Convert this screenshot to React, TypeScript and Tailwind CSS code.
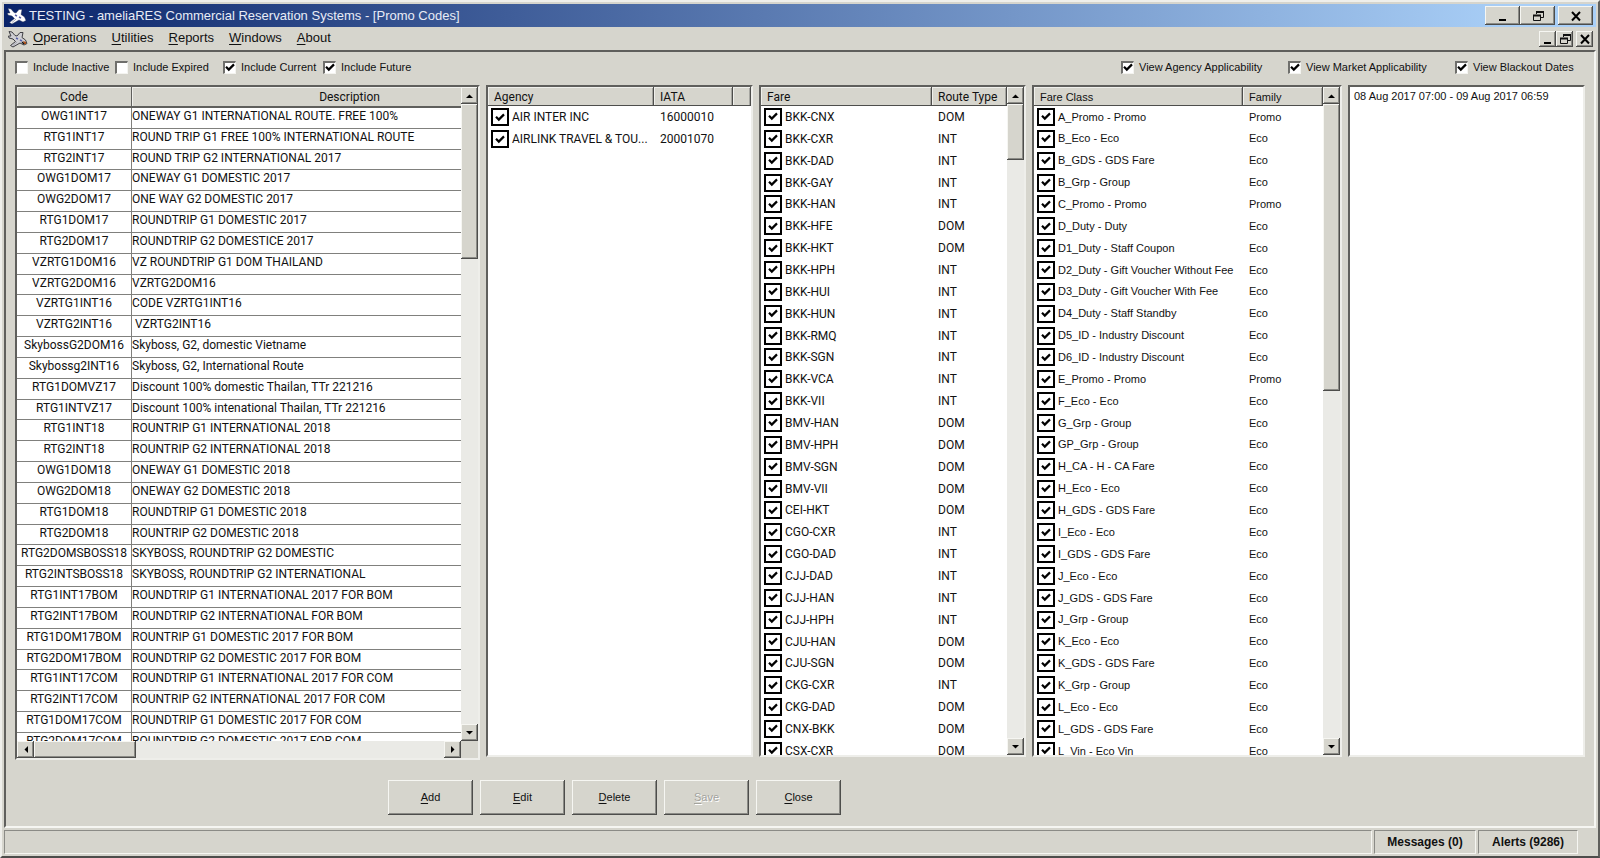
import React from 'react';

const RAISED =
  'bg-[#d6d5cd] shadow-[inset_-1px_-1px_#4d4d4b,inset_1px_1px_#f6f6f2,inset_-2px_-2px_#8b8b86]';

const PROMOS: [string, string][] = [
  ['OWG1INT17', 'ONEWAY G1 INTERNATIONAL ROUTE. FREE 100%'],
  ['RTG1INT17', 'ROUND TRIP G1 FREE 100% INTERNATIONAL ROUTE'],
  ['RTG2INT17', 'ROUND TRIP G2 INTERNATIONAL 2017'],
  ['OWG1DOM17', 'ONEWAY G1 DOMESTIC 2017'],
  ['OWG2DOM17', 'ONE WAY G2 DOMESTIC 2017'],
  ['RTG1DOM17', 'ROUNDTRIP G1 DOMESTIC 2017'],
  ['RTG2DOM17', 'ROUNDTRIP G2 DOMESTICE 2017'],
  ['VZRTG1DOM16', 'VZ ROUNDTRIP G1 DOM THAILAND'],
  ['VZRTG2DOM16', 'VZRTG2DOM16'],
  ['VZRTG1INT16', 'CODE VZRTG1INT16'],
  ['VZRTG2INT16', ' VZRTG2INT16'],
  ['SkybossG2DOM16', 'Skyboss, G2, domestic Vietname'],
  ['Skybossg2INT16', 'Skyboss, G2, International Route'],
  ['RTG1DOMVZ17', 'Discount 100% domestic Thailan, TTr 221216'],
  ['RTG1INTVZ17', 'Discount 100% intenational Thailan, TTr 221216'],
  ['RTG1INT18', 'ROUNTRIP G1 INTERNATIONAL 2018'],
  ['RTG2INT18', 'ROUNTRIP G2 INTERNATIONAL 2018'],
  ['OWG1DOM18', 'ONEWAY G1 DOMESTIC 2018'],
  ['OWG2DOM18', 'ONEWAY G2 DOMESTIC 2018'],
  ['RTG1DOM18', 'ROUNDTRIP G1 DOMESTIC 2018'],
  ['RTG2DOM18', 'ROUNTRIP G2 DOMESTIC 2018'],
  ['RTG2DOMSBOSS18', 'SKYBOSS, ROUNDTRIP G2 DOMESTIC'],
  ['RTG2INTSBOSS18', 'SKYBOSS, ROUNDTRIP G2 INTERNATIONAL'],
  ['RTG1INT17BOM', 'ROUNDTRIP G1 INTERNATIONAL 2017 FOR BOM'],
  ['RTG2INT17BOM', 'ROUNDTRIP G2 INTERNATIONAL FOR BOM'],
  ['RTG1DOM17BOM', 'ROUNTRIP G1 DOMESTIC 2017 FOR BOM'],
  ['RTG2DOM17BOM', 'ROUNDTRIP G2 DOMESTIC 2017 FOR BOM'],
  ['RTG1INT17COM', 'ROUNDTRIP G1 INTERNATIONAL 2017 FOR COM'],
  ['RTG2INT17COM', 'ROUNTRIP G2 INTERNATIONAL 2017 FOR COM'],
  ['RTG1DOM17COM', 'ROUNDTRIP G1 DOMESTIC 2017 FOR COM'],
  ['RTG2DOM17COM', 'ROUNDTRIP G2 DOMESTIC 2017 FOR COM'],
];

const AGENCIES = [
  ['AIR INTER INC', '16000010'],
  ['AIRLINK TRAVEL & TOU...', '20001070'],
];

const FARES = [
  ['BKK-CNX', 'DOM'],
  ['BKK-CXR', 'INT'],
  ['BKK-DAD', 'INT'],
  ['BKK-GAY', 'INT'],
  ['BKK-HAN', 'INT'],
  ['BKK-HFE', 'DOM'],
  ['BKK-HKT', 'DOM'],
  ['BKK-HPH', 'INT'],
  ['BKK-HUI', 'INT'],
  ['BKK-HUN', 'INT'],
  ['BKK-RMQ', 'INT'],
  ['BKK-SGN', 'INT'],
  ['BKK-VCA', 'INT'],
  ['BKK-VII', 'INT'],
  ['BMV-HAN', 'DOM'],
  ['BMV-HPH', 'DOM'],
  ['BMV-SGN', 'DOM'],
  ['BMV-VII', 'DOM'],
  ['CEI-HKT', 'DOM'],
  ['CGO-CXR', 'INT'],
  ['CGO-DAD', 'INT'],
  ['CJJ-DAD', 'INT'],
  ['CJJ-HAN', 'INT'],
  ['CJJ-HPH', 'INT'],
  ['CJU-HAN', 'DOM'],
  ['CJU-SGN', 'DOM'],
  ['CKG-CXR', 'INT'],
  ['CKG-DAD', 'DOM'],
  ['CNX-BKK', 'DOM'],
  ['CSX-CXR', 'DOM'],
];

const CLASSES = [
  ['A_Promo - Promo', 'Promo'],
  ['B_Eco - Eco', 'Eco'],
  ['B_GDS - GDS Fare', 'Eco'],
  ['B_Grp - Group', 'Eco'],
  ['C_Promo - Promo', 'Promo'],
  ['D_Duty - Duty', 'Eco'],
  ['D1_Duty - Staff Coupon', 'Eco'],
  ['D2_Duty - Gift Voucher Without Fee', 'Eco'],
  ['D3_Duty - Gift Voucher With Fee', 'Eco'],
  ['D4_Duty - Staff Standby', 'Eco'],
  ['D5_ID - Industry Discount', 'Eco'],
  ['D6_ID - Industry Discount', 'Eco'],
  ['E_Promo - Promo', 'Promo'],
  ['F_Eco - Eco', 'Eco'],
  ['G_Grp - Group', 'Eco'],
  ['GP_Grp - Group', 'Eco'],
  ['H_CA - H - CA Fare', 'Eco'],
  ['H_Eco - Eco', 'Eco'],
  ['H_GDS - GDS Fare', 'Eco'],
  ['I_Eco - Eco', 'Eco'],
  ['I_GDS - GDS Fare', 'Eco'],
  ['J_Eco - Eco', 'Eco'],
  ['J_GDS - GDS Fare', 'Eco'],
  ['J_Grp - Group', 'Eco'],
  ['K_Eco - Eco', 'Eco'],
  ['K_GDS - GDS Fare', 'Eco'],
  ['K_Grp - Group', 'Eco'],
  ['L_Eco - Eco', 'Eco'],
  ['L_GDS - GDS Fare', 'Eco'],
  ['L_Vin - Eco Vin', 'Eco'],
];

const PlaneIcon: React.FC<{ outlined?: boolean }> = ({ outlined }) => (
  <svg viewBox="0 0 20 18" className="h-[18px] w-5 shrink-0">
    <path
      d="M1 1.5 L4 2 L7 5.5 L9 6 L12 2.5 L15 2.5 L14 7.5 L17.5 10 L19 13.5 L16 15 L12 13 L5 17 L2.5 15.5 L7.5 11.5 L5 9 L1 8 L0.5 6 L3 6 Z"
      fill={outlined ? '#cfcfd3' : '#ffffff'}
      stroke={outlined ? '#3f3f44' : '#2c3354'}
      strokeWidth={outlined ? 1 : 0.4}
    />
    <path d="M8 8 L10 9 M12 10 L14 11" stroke="#5b62a8" strokeWidth="1.4" />
    <path d="M9 12 L5 15.5" stroke="#a9a9b4" strokeWidth="1" />
    {outlined && <path d="M15 11 L18 12 L18 14 L16 14 Z" fill="#b4551d" />}
    {outlined && <path d="M14 12 L16 14" stroke="#111111" strokeWidth="1.2" />}
  </svg>
);

const MinimizeGlyph = () => (
  <svg viewBox="0 0 12 12" className="h-3 w-3">
    <rect x="2" y="9" width="7" height="2" />
  </svg>
);

const RestoreGlyph = () => (
  <svg viewBox="0 0 12 12" className="h-3 w-3" fill="none" stroke="#111" strokeWidth="1">
    <path d="M4.5 4 V1.5 H11.5 V7.5 H9" />
    <path d="M4 2 H12 M1 5.5 H9" strokeWidth="2" />
    <path d="M1.5 5 V10.5 H8.5 V5" />
  </svg>
);

const CloseGlyph = () => (
  <svg viewBox="0 0 12 12" className="h-3 w-3" stroke="#000" strokeWidth="2">
    <path d="M2 2 L10 10.5 M10 2 L2 10.5" />
  </svg>
);

const WindowButtons: React.FC<{ small?: boolean }> = ({ small }) => {
  const size = small ? 'h-4 w-[17px]' : 'h-[19px] w-[35px]';
  const cls = `flex items-center justify-center ${RAISED} ${size}`;
  return (
    <div className="ml-auto flex">
      <button className={cls} aria-label="Minimize"><MinimizeGlyph /></button>
      <button className={cls} aria-label="Restore"><RestoreGlyph /></button>
      <button className={`${cls} ml-[3px]`} aria-label="Close"><CloseGlyph /></button>
    </div>
  );
};

const CheckGlyph = () => (
  <svg viewBox="0 0 10 9" className="pointer-events-none col-start-1 row-start-1 hidden h-[9px] w-[10px] peer-checked:block">
    <path d="M1 3.8 L3.8 6.6 L9 1.4" fill="none" stroke="#000" strokeWidth="2.2" />
  </svg>
);

const FilterCheck: React.FC<{ label: string; checked?: boolean; width: string }> = ({ label, checked, width }) => (
  <label className={`flex items-center gap-[5px] whitespace-nowrap ${width}`}>
    <span className="grid shrink-0 place-items-center">
      <input
        type="checkbox"
        defaultChecked={checked}
        className="peer col-start-1 row-start-1 h-[13px] w-[13px] appearance-none border-t-2 border-r border-b border-l-2 border-t-[#6f6f6c] border-r-[#f4f4f0] border-b-[#f4f4f0] border-l-[#6f6f6c] bg-white"
      />
      <CheckGlyph />
    </span>
    {label}
  </label>
);

const RowCheck: React.FC<{ label: string }> = ({ label }) => (
  <label className="flex items-center gap-[3px] whitespace-nowrap pl-[3px]">
    <span className="grid shrink-0 place-items-center">
      <input
        type="checkbox"
        defaultChecked
        className="peer col-start-1 row-start-1 h-[18px] w-[18px] appearance-none border-2 border-black bg-white"
      />
      <CheckGlyph />
    </span>
    {label}
  </label>
);

const ARROWS = {
  up: 'M0 4 L3.5 0.5 L7 4 Z',
  down: 'M0 0 L7 0 L3.5 3.5 Z',
  left: 'M4 0 L4 7 L0.5 3.5 Z',
  right: 'M0 0 L0 7 L3.5 3.5 Z',
};

const ScrollButton: React.FC<{ dir: keyof typeof ARROWS }> = ({ dir }) => {
  const vertical = dir === 'up' || dir === 'down';
  return (
    <button aria-label={`Scroll ${dir}`} className={`flex h-[17px] w-[17px] shrink-0 items-center justify-center ${RAISED}`}>
      <svg viewBox={vertical ? '0 0 7 4' : '0 0 4 7'} className={vertical ? 'h-1 w-[7px]' : 'h-[7px] w-1'}>
        <path d={ARROWS[dir]} />
      </svg>
    </button>
  );
};

const VScroll: React.FC<{ thumb: string }> = ({ thumb }) => (
  <div className="flex w-[17px] shrink-0 flex-col bg-[#eaeae6]">
    <ScrollButton dir="up" />
    <div className={`${RAISED} ${thumb}`} />
    <div className="flex-1" />
    <ScrollButton dir="down" />
  </div>
);

const PANEL =
  'flex min-h-0 min-w-0 overflow-hidden border-2 border-t-[#5f5f5c] border-l-[#5f5f5c] border-r-[#eeeeea] border-b-[#eeeeea]';

const TH =
  'h-[19px] overflow-hidden bg-[#d6d5cd] p-0 pt-px pl-[6px] text-left align-middle font-normal leading-4 shadow-[inset_-1px_-1px_#4d4d4b,inset_1px_1px_#f0f0ec,inset_-2px_0_#a5a5a0]';

type CheckListProps = {
  heads: string[];
  widths: string[];
  rows: string[][];
  height: string;
  thumb?: string;
  font?: string;
};

const CheckList: React.FC<CheckListProps> = ({ heads, widths, rows, height, thumb, font = '' }) => (
  <div className={`${PANEL} mb-[3px] bg-white`}>
    <div className="min-w-0 flex-1 overflow-hidden">
      <table className={`w-full table-fixed border-separate border-spacing-0 ${height} ${font}`}>
        <thead>
          <tr>
            {heads.map((h, i) => (
              <th key={i} className={`${TH} ${widths[i]}`}>{h}</th>
            ))}
          </tr>
        </thead>
        <tbody>
          {rows.map(([name, value]) => (
            <tr key={name}>
              <td className="p-0 align-middle"><RowCheck label={name} /></td>
              <td className="p-0 pl-[6px] align-middle">{value}</td>
            </tr>
          ))}
        </tbody>
      </table>
    </div>
    {thumb && <VScroll thumb={thumb} />}
  </div>
);

const PromoTable = () => (
  <div className={`${PANEL} bg-[#d6d5cd]`}>
    <div className="flex min-w-0 flex-1 flex-col">
      <div className="min-h-0 flex-1 overflow-hidden bg-white">
        <table className="h-[667px] w-[550px] table-fixed border-separate border-spacing-0">
          <thead>
            <tr>
              <th className="h-[21px] w-[115px] border-r border-b-2 border-[#5f5f5c] bg-[#d6d5cd] p-0 align-middle font-normal leading-4 shadow-[inset_1px_1px_#f0f0ec]">Code</th>
              <th className="h-[21px] border-b-2 border-[#5f5f5c] bg-[#d6d5cd] p-0 align-middle font-normal leading-4 shadow-[inset_1px_1px_#f0f0ec]">Description</th>
            </tr>
          </thead>
          <tbody>
            {PROMOS.map(([code, desc]) => (
              <tr key={code}>
                <td className="whitespace-nowrap border-r border-b border-[#80807d] p-0 text-center align-top leading-4">{code}</td>
                <td className="whitespace-pre border-b border-[#80807d] p-0 align-top leading-4">{desc}</td>
              </tr>
            ))}
          </tbody>
        </table>
      </div>
      <div className="flex shrink-0 bg-[#eaeae6]">
        <ScrollButton dir="left" />
        <div className={`w-[102px] ${RAISED}`} />
        <div className="flex-1" />
        <ScrollButton dir="right" />
      </div>
    </div>
    <div className="mb-[17px] flex">
      <VScroll thumb="h-[155px]" />
    </div>
  </div>
);

const MENUS = ['Operations', 'Utilities', 'Reports', 'Windows', 'About'];
const ACTIONS = ['Add', 'Edit', 'Delete', 'Save', 'Close'];

const Mnemonic: React.FC<{ text: string }> = ({ text }) => (
  <span>
    <span className="underline underline-offset-2">{text[0]}</span>
    {text.slice(1)}
  </span>
);

const STATUS = 'flex items-center border border-t-[#8b8b86] border-l-[#8b8b86] border-r-[#f6f6f2] border-b-[#f6f6f2]';

export default function App() {
  return (
    <div className="flex h-screen flex-col border-2 border-t-[#efefeb] border-r-[#5f5f5c] border-b-[#4d4d4b] border-l-[#efefeb] bg-[#d6d5cd] p-[2px] font-['Liberation_Sans',Arial,sans-serif] text-[11px] text-[#111]">
      {/* Title bar */}
      <header className="flex h-[23px] shrink-0 items-center bg-linear-to-r/srgb from-[#0a246a] to-[#a9cff7] to-95% pr-[3px] pl-[3px]">
        <PlaneIcon />
        <h1 className="ml-[2px] text-[13px] text-[#e8ecf6]">TESTING - ameliaRES Commercial Reservation Systems - [Promo Codes]</h1>
        <WindowButtons />
      </header>

      {/* Menu bar */}
      <nav className="flex h-[23px] shrink-0 items-center pr-[3px] pl-1">
        <PlaneIcon outlined />
        <div className="ml-[5px] flex gap-[15px] pb-[2px] text-[13px]">
          {MENUS.map((m) => (
            <button key={m}><Mnemonic text={m} /></button>
          ))}
        </div>
        <WindowButtons small />
      </nav>

      {/* Promo codes window */}
      <main className="flex min-h-0 flex-1 flex-col border-2 border-t-[#5f5f5c] border-l-[#5f5f5c] border-r-[#f6f6f2] border-b-[#f6f6f2] pr-[9px] pb-[11px] pl-[9px]">
        <div className="flex h-[33px] shrink-0 items-center pb-[2px]">
          <FilterCheck label="Include Inactive" width="w-[100px]" />
          <FilterCheck label="Include Expired" width="w-[108px]" />
          <FilterCheck label="Include Current" width="w-[100px]" checked />
          <FilterCheck label="Include Future" width="w-[100px]" checked />
          <div className="ml-auto flex">
            <FilterCheck label="View Agency Applicability" width="w-[167px]" checked />
            <FilterCheck label="View Market Applicability" width="w-[167px]" checked />
            <FilterCheck label="View Blackout Dates" width="w-[130px]" checked />
          </div>
        </div>

        <div className="grid min-h-0 flex-1 grid-cols-[465fr_267fr_267fr_310fr_237fr] grid-rows-1 gap-[6px] font-[Roboto,'Liberation_Sans',sans-serif] text-xs">
          <PromoTable />
          <CheckList
            heads={['Agency', 'IATA', '']}
            widths={['w-[166px]', 'w-[79px]', '']}
            rows={AGENCIES}
            height="h-[63px]"
          />
          <CheckList
            heads={['Fare', 'Route Type']}
            widths={['w-[171px]', '']}
            rows={FARES}
            height="h-[675px]"
            thumb="h-[56px]"
          />
          <CheckList
            heads={['Fare Class', 'Family']}
            widths={['w-[209px]', '']}
            rows={CLASSES}
            height="h-[675px]"
            thumb="h-[287px]"
            font="font-['Liberation_Sans',Arial,sans-serif] text-[11px]"
          />
          <div className={`${PANEL} mb-[3px] bg-white`}>
            <ul className="px-1 font-['Liberation_Sans',Arial,sans-serif] text-[11px] leading-[18px]">
              <li>08 Aug 2017 07:00 - 09 Aug 2017 06:59</li>
            </ul>
          </div>
        </div>

        <div className="mt-5 flex shrink-0 gap-[7px] pl-[373px]">
          {ACTIONS.map((a) => (
            <button
              key={a}
              disabled={a === 'Save'}
              className={`h-[35px] w-[85px] disabled:text-[#a3a39e] disabled:[text-shadow:1px_1px_#fff] ${RAISED}`}
            >
              <Mnemonic text={a} />
            </button>
          ))}
        </div>
      </main>

      {/* Status bar */}
      <footer className="mt-[2px] flex h-6 shrink-0 gap-[2px] pr-[18px] text-xs font-bold">
        <div className={`${STATUS} flex-1`} />
        <div className={`${STATUS} w-[102px] justify-center`}>Messages (0)</div>
        <div className={`${STATUS} w-[100px] justify-center`}>Alerts (9286)</div>
      </footer>
    </div>
  );
}
